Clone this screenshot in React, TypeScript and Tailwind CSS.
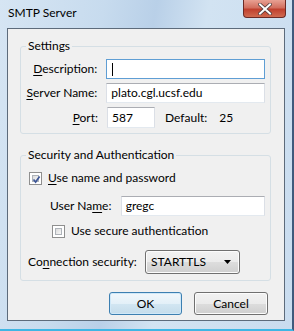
import React from 'react';

const font = { fontFamily: 'Lato, "Open Sans", Arial, sans-serif' };

function U({ children }: { children: React.ReactNode }) {
  return <span className="underline underline-offset-[2px] decoration-[1px]">{children}</span>;
}

function TextBox({ value, focused, className }: { value?: string; focused?: boolean; className: string }) {
  return (
    <div
      className={`h-[20px] flex items-center pl-[4px] bg-white border text-[12px] text-black ${
        focused ? 'border-[#5f9ed4]' : 'border-t-[#abadb3] border-x-[#dbdfe6] border-b-[#e3e9ef]'
      } ${className}`}
    >
      {focused ? <span className="w-[1px] h-[13px] bg-black ml-[1px]" /> : value}
    </div>
  );
}

function Check({ checked }: { checked?: boolean }) {
  return (
    <div className="w-[13px] h-[13px] border border-[#8f8f8f] bg-white p-[2px] shrink-0">
      <div className="w-full h-full border border-[#aeb3b9] bg-gradient-to-br from-[#dcdcdc] to-[#f8f8f8] relative">
        {checked && (
          <svg viewBox="0 0 9 9" className="absolute -left-[1px] -top-[1px] w-[9px] h-[9px]">
            <path d="M1.5 4.5 L3.6 7 L7.6 1.5" stroke="#3e5797" strokeWidth="1.7" fill="none" />
          </svg>
        )}
      </div>
    </div>
  );
}

function Button({ label, def, className }: { label: string; def?: boolean; className: string }) {
  return (
    <div
      className={`h-[23px] rounded-[3px] border flex items-center justify-center text-[12px] text-black ${
        def
          ? 'border-[#3c7fb1] bg-[linear-gradient(#f1f7fb_0%,#e3f0f8_50%,#d2e6f2_51%,#c4dceb_100%)] shadow-[inset_0_0_0_1px_#cfe8f8]'
          : 'border-[#707070] bg-[linear-gradient(#f2f2f2_0%,#ebebeb_50%,#dddddd_51%,#cfcfcf_100%)] shadow-[inset_0_0_0_1px_#fcfcfc]'
      } ${className}`}
    >
      {label}
    </div>
  );
}

export default function App() {
  return (
    <div
      style={font}
      className="w-[294px] h-[331px] relative flex flex-col pt-[28px] px-[7px] pb-[8px] bg-[linear-gradient(100deg,#d6e5f3_0%,#c7dbee_30%,#b9d0e8_45%,#d2e3f2_60%,#c9dcef_100%)] border-r-[2px] border-r-[#3f5a7c] border-b-[2px] border-b-[#3fb6e4]"
    >
      <div className="absolute left-[8px] top-[5px] text-[12px] leading-[16px] text-black">SMTP Server</div>
      <div className="absolute right-[6px] top-0 w-[43px] h-[18px] rounded-b-[4px] border border-t-0 border-[#6b2a25] bg-[linear-gradient(#e8a193_0%,#d26f5f_45%,#c0402e_55%,#d06a50_100%)] flex items-center justify-center">
        <svg viewBox="0 0 14 12" className="w-[14px] h-[12px]">
          <path d="M2 1.5 L12 10.5 M12 1.5 L2 10.5" stroke="#4a3a3a" strokeWidth="3.6" strokeLinecap="square" />
          <path d="M2 1.5 L12 10.5 M12 1.5 L2 10.5" stroke="#ffffff" strokeWidth="2" strokeLinecap="square" />
        </svg>
      </div>

      <div className="flex-1 border border-[#5d6b7b] bg-[#f0f0f0] pt-[9px] pl-[12px] pr-[13px] flex flex-col text-[12px] text-black">
        <fieldset className="border border-[#d5dfe5] rounded-[3px] pl-0 pr-[5px] pb-[5px] pt-[5px] m-0 min-w-0">
          <legend className="ml-[5px] px-[2px] leading-[16px]">Settings</legend>
          <div className="flex flex-col gap-[4px]">
            <div className="flex items-center">
              <div className="w-[77px] text-right pr-0"><U>D</U>escription:</div>
              <TextBox focused className="ml-[9px] w-[160px]" />
            </div>
            <div className="flex items-center">
              <div className="w-[77px] text-right"><U>S</U>erver Name:</div>
              <TextBox value="plato.cgl.ucsf.edu" className="ml-[9px] w-[160px]" />
            </div>
            <div className="flex items-center">
              <div className="w-[77px] text-right"><U>P</U>ort:</div>
              <TextBox value="587" className="ml-[9px] w-[48px] h-[21px]" />
              <div className="ml-[10px]">Default:</div>
              <div className="ml-[12px]">25</div>
            </div>
          </div>
        </fieldset>

        <fieldset className="mt-[13px] border border-[#d5dfe5] rounded-[3px] pl-[8px] pr-[5px] pt-[8px] pb-[6px] m-0 min-w-0">
          <legend className="ml-[-3px] px-[2px] leading-[16px]">Security and Authentication</legend>
          <div className="flex items-center gap-[6px] h-[14px]">
            <Check checked />
            <div>
              <U>U</U>se name and password
            </div>
          </div>
          <div className="flex items-center mt-[11px]">
            <div className="ml-[21px] w-[71px]">
              User Na<U>m</U>e:
            </div>
            <TextBox value="gregc" className="w-[145px]" />
          </div>
          <div className="flex items-center gap-[6px] h-[14px] mt-[8px] ml-[23px]">
            <Check />
            <div>
              Use secure authent<U>i</U>cation
            </div>
          </div>
          <div className="flex items-center mt-[12px]">
            <div className="w-[117px] -ml-[1px]">
              Co<U>n</U>nection security:
            </div>
            <div className="w-[95px] h-[24px] rounded-[3px] border border-[#707070] bg-[linear-gradient(#f2f2f2_0%,#ebebeb_50%,#dddddd_51%,#cfcfcf_100%)] shadow-[inset_0_0_0_1px_#fcfcfc] flex items-center pl-[5px] pr-[8px]">
              <span className="flex-1">STARTTLS</span>
              <svg viewBox="0 0 7 4" className="w-[7px] h-[4px]">
                <path d="M0 0 H7 L3.5 4 Z" fill="#000" />
              </svg>
            </div>
          </div>
        </fieldset>

        <div className="flex justify-end gap-[12px] mt-[11px] pr-[3px]">
          <Button label="OK" def className="w-[73px]" />
          <Button label="Cancel" className="w-[74px]" />
        </div>
      </div>
    </div>
  );
}
